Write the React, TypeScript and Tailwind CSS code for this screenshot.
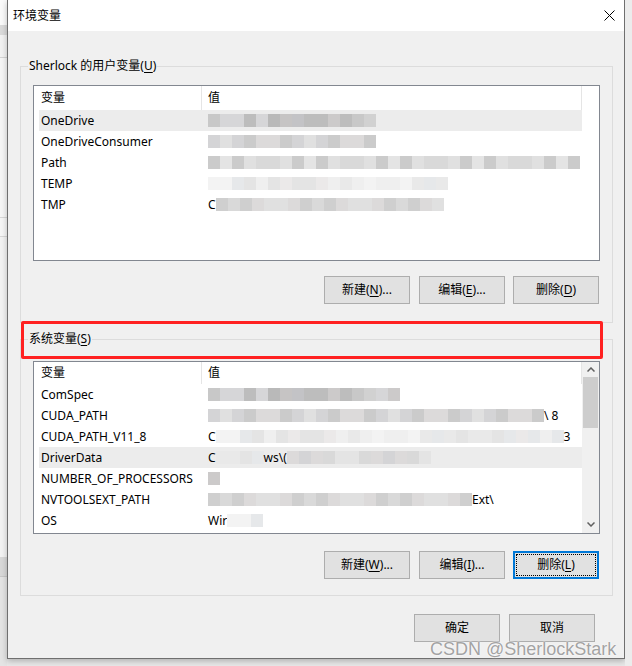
import React from 'react';

type Seg = { t?: string; n?: number; tone?: 'd' | 'm' | 'l' };
type Row = { name: string; val: Seg[] };

const dark = ['#c8c8c8', '#bdbdbd', '#d1d1d1', '#c3c3c6', '#cccaca', '#b9b9b9', '#d6d6d8', '#c6c4c4'];
const mid = ['#d9d9d9', '#cfcfcf', '#e0e0e0', '#d4d4d6', '#dcdada', '#e4e4e4', '#cbcbcb'];
const light = ['#e9e9e9', '#efefef', '#e4e4e4', '#f3f3f3', '#ebe9e9', '#e6e8ea'];

const userRows: Row[] = [
  { name: 'OneDrive', val: [{ n: 14, tone: 'd' }] },
  { name: 'OneDriveConsumer', val: [{ n: 14, tone: 'm' }] },
  { name: 'Path', val: [{ n: 31, tone: 'm' }] },
  { name: 'TEMP', val: [{ n: 20, tone: 'l' }] },
  { name: 'TMP', val: [{ t: 'C' }, { n: 19, tone: 'm' }] },
];

const sysRows: Row[] = [
  { name: 'ComSpec', val: [{ n: 16, tone: 'd' }] },
  { name: 'CUDA_PATH', val: [{ n: 28, tone: 'm' }, { t: '\\ 8' }] },
  { name: 'CUDA_PATH_V11_8', val: [{ t: 'C' }, { n: 29, tone: 'l' }, { t: '3' }] },
  { name: 'DriverData', val: [{ t: 'C' }, { n: 4, tone: 'l' }, { t: 'ws\\(' }, { n: 12, tone: 'm' }] },
  { name: 'NUMBER_OF_PROCESSORS', val: [{ n: 1, tone: 'd' }] },
  { name: 'NVTOOLSEXT_PATH', val: [{ n: 22, tone: 'm' }, { t: 'Ext\\' }] },
  { name: 'OS', val: [{ t: 'Wir' }, { n: 3, tone: 'l' }] },
];

function Mosaic({ n, tone, seed }: { n: number; tone: 'd' | 'm' | 'l'; seed: number }) {
  const pal = tone === 'd' ? dark : tone === 'm' ? mid : light;
  return (
    <div className="flex h-[13px] shrink-0">
      {Array.from({ length: n }, (_, i) => (
        <div
          key={i}
          className="w-[12px] h-full"
          style={{ background: pal[(i * 5 + seed * 3 + ((i * i) % 7)) % pal.length] }}
        />
      ))}
    </div>
  );
}

function Btn({ label, k, rest = '', focused = false }: { label: string; k: string; rest?: string; focused?: boolean }) {
  const text = (
    <span>
      {label}(<span className="underline underline-offset-2">{k}</span>){rest}
    </span>
  );
  if (focused)
    return (
      <div className="w-[86px] h-[28px] bg-[#e1e1e1] border-2 border-[#0078d7] p-[1px] flex">
        <div className="flex-1 border border-dotted border-black flex items-center justify-center">{text}</div>
      </div>
    );
  return (
    <div className="w-[86px] h-[28px] bg-[#e1e1e1] border border-[#adadad] flex items-center justify-center">
      {text}
    </div>
  );
}

function Chevron({ up }: { up?: boolean }) {
  return (
    <svg width="8" height="5" viewBox="0 0 8 5">
      <path
        d={up ? 'M0.5 4.5 L4 1 L7.5 4.5' : 'M0.5 0.5 L4 4 L7.5 0.5'}
        fill="none"
        stroke="#606060"
        strokeWidth="1.5"
      />
    </svg>
  );
}

function VarList({
  rows,
  selected,
  headerH,
  scroll,
  className,
}: {
  rows: Row[];
  selected: number;
  headerH: string;
  scroll?: boolean;
  className: string;
}) {
  return (
    <div className={`border border-[#828790] bg-white flex overflow-hidden ${className}`}>
      <div className="flex-1 flex flex-col pl-[5px]">
        <div className={`flex ${headerH} items-center border-r border-[#e5e5e5] shrink-0`}>
          <div className="w-[163px] pl-[2px] h-full flex items-center border-r border-[#e5e5e5]">变量</div>
          <div className="flex-1 pl-[6px]">值</div>
        </div>
        {rows.map((r, ri) => (
          <div
            key={r.name}
            className={`flex h-[21px] items-center shrink-0 ${ri === selected ? 'bg-[#ececec]' : ''}`}
          >
            <div className="w-[163px] pl-[2px] whitespace-nowrap overflow-hidden">{r.name}</div>
            <div className="flex-1 pl-[6px] flex items-center overflow-hidden whitespace-nowrap">
              {r.val.map((s, si) =>
                s.t ? (
                  <span key={si} className="shrink-0">{s.t}</span>
                ) : (
                  <Mosaic key={si} n={s.n!} tone={s.tone!} seed={ri + si} />
                ),
              )}
            </div>
          </div>
        ))}
      </div>
      {scroll ? (
        <div className="w-[17px] bg-[#f0f0f0] flex flex-col items-center">
          <div className="h-[15px] w-full flex items-center justify-center">
            <Chevron up />
          </div>
          <div className="h-[51px] w-[15px] bg-[#cdcdcd]" />
          <div className="flex-1" />
          <div className="h-[17px] w-full flex items-center justify-center">
            <Chevron />
          </div>
        </div>
      ) : (
        <div className="w-[17px]" />
      )}
    </div>
  );
}

function Group({ label, className, children }: { label: React.ReactNode; className: string; children: React.ReactNode }) {
  return (
    <div className={`relative border border-[#dcdcdc] ${className}`}>
      <span className="absolute left-[7px] top-[-9px] bg-[#f0f0f0] px-[1px] leading-[16px]">{label}</span>
      {children}
    </div>
  );
}

export default function App() {
  return (
    <div className="relative w-[632px] h-[666px] bg-[#e8e8e8] flex overflow-hidden font-['Noto_Sans','Noto_Sans_CJK_SC',sans-serif] text-[12px] text-black">
      {/* window behind */}
      <div className="w-[7px] flex flex-col shrink-0">
        <div className="h-[25px] bg-[#fafafa]" />
        <div className="h-[10px] bg-[#dadada]" />
        <div className="h-[23px] bg-[#f2f2f2] border-b border-[#d4d4d4]" />
        <div className="h-[160px] bg-[#f6f6f6] border-b border-[#d8d8d8]" />
        <div className="h-[19px] bg-[#f6f6f6] border-b border-[#d8d8d8]" />
        <div className="h-[320px] bg-[#f3f3f3]" />
        <div className="h-[20px] bg-[#d8d8d8] border-b border-[#c8c8c8]" />
        <div className="flex-1 bg-[#e4e4e4]" />
      </div>

      <div className="w-[618px] h-[659px] shrink-0 bg-[#f0f0f0] border-x border-b border-[#6f6f6f] flex flex-col shadow-[0_2px_6px_rgba(0,0,0,0.25)]">
        <div className="h-[31px] bg-white flex items-center justify-between pl-[5px] pr-[9px] shrink-0">
          <span>环境变量</span>
          <svg width="11" height="11" viewBox="0 0 11 11">
            <path d="M0.5 0.5 L10.5 10.5 M10.5 0.5 L0.5 10.5" stroke="#000" strokeWidth="1" />
          </svg>
        </div>

        <Group
          className="ml-[12px] mt-[35px] w-[593px] h-[257px] pt-[18px] pl-[12px] pr-[12px] shrink-0"
          label={
            <>
              Sherlock 的用户变量(<span className="underline underline-offset-2">U</span>)
            </>
          }
        >
          <VarList rows={userRows} selected={0} headerH="h-[24px]" className="w-[567px] h-[176px]" />
          <div className="flex justify-end mt-[15px] pr-[1px]">
            <div className="mr-[9px]">
              <Btn label="新建" k="N" rest="..." />
            </div>
            <div className="mr-[8px]">
              <Btn label="编辑" k="E" rest="..." />
            </div>
            <Btn label="删除" k="D" />
          </div>
        </Group>

        <Group
          className="ml-[12px] mt-[16px] w-[593px] h-[257px] pt-[21px] pl-[12px] pr-[12px] shrink-0"
          label={
            <>
              系统变量(<span className="underline underline-offset-2">S</span>)
            </>
          }
        >
          <VarList rows={sysRows} selected={3} headerH="h-[22px]" scroll className="w-[567px] h-[173px]" />
          <div className="flex justify-end mt-[17px] pr-[1px]">
            <div className="mr-[9px]">
              <Btn label="新建" k="W" rest="..." />
            </div>
            <div className="mr-[8px]">
              <Btn label="编辑" k="I" rest="..." />
            </div>
            <Btn label="删除" k="L" focused />
          </div>
        </Group>

        <div className="flex justify-end gap-[9px] mt-[18px] pr-[29px]">
          <div className="w-[86px] h-[28px] bg-[#e1e1e1] border border-[#adadad] flex items-center justify-center">确定</div>
          <div className="w-[86px] h-[28px] bg-[#e1e1e1] border border-[#adadad] flex items-center justify-center">取消</div>
        </div>
      </div>

      <div className="flex-1 bg-[#ececec]" />

      {/* annotation + watermark overlays */}
      <div className="absolute left-[21px] top-[321px] w-[582px] h-[38px] border-[3px] border-[#ff2121] rounded-[2px]" />
      <div className="absolute left-[430px] top-[639px] font-['Liberation_Sans',sans-serif] text-[18px] leading-[21px] text-[#a3a3a3] [text-shadow:0_0_2px_#ffffff,0_0_1px_#ffffff]">
        CSDN @SherlockStark
      </div>
    </div>
  );
}
